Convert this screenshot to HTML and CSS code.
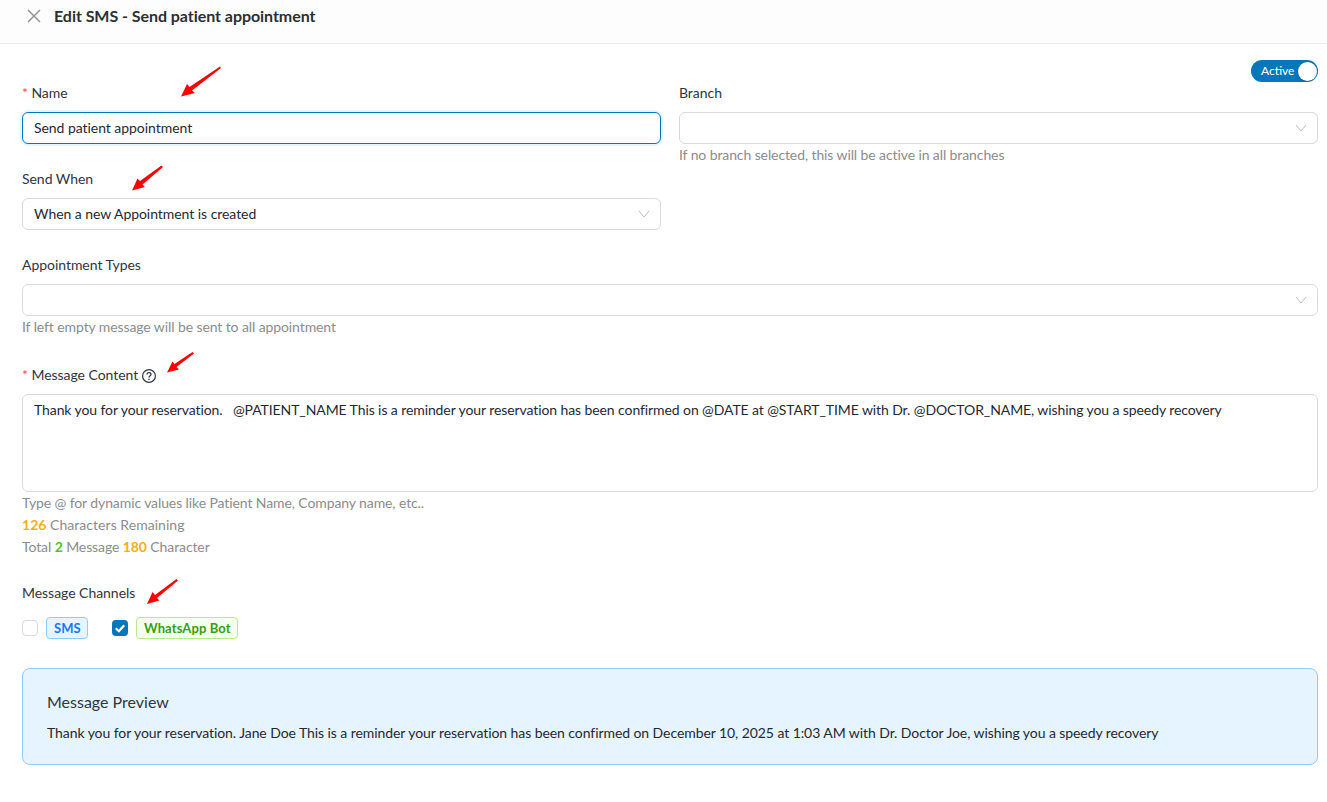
FILE: index.html
```html
<!DOCTYPE html>
<html lang="en">
<head>
    <meta charset="UTF-8">
    <title>Edit SMS - Send patient appointment</title>
    <link rel="stylesheet" href="styles.css">
</head>
<body>
    <div class="header">
        <svg class="close-icon" viewBox="0 0 14 14" width="14" height="14"><path d="M1 1L13 13M13 1L1 13" stroke="#8c8c8c" stroke-width="1.4" fill="none"/></svg>
        <div class="title">Edit SMS - Send patient appointment</div>
    </div>

    <div class="content">
        <div class="toggle-row">
            <div class="toggle"><span>Active</span><i class="toggle-knob"></i></div>
        </div>

        <div class="two-cols">
            <div>
                <div class="form-group">
                    <label class="form-label"><span class="required">*</span>Name</label>
                    <div class="form-input focused">Send patient appointment</div>
                </div>
                <div class="form-group">
                    <label class="form-label">Send When</label>
                    <div class="form-input">
                        When a new Appointment is created
                        <svg class="chevron" viewBox="0 0 12 12" width="12" height="12"><path d="M1 3L6 9L11 3" stroke="#bfbfbf" stroke-width="1" fill="none"/></svg>
                    </div>
                </div>
            </div>
            <div>
                <div class="form-group">
                    <label class="form-label">Branch</label>
                    <div class="form-input">
                        <svg class="chevron" viewBox="0 0 12 12" width="12" height="12"><path d="M1 3L6 9L11 3" stroke="#bfbfbf" stroke-width="1" fill="none"/></svg>
                    </div>
                    <div class="help">If no branch selected, this will be active in all branches</div>
                </div>
            </div>
        </div>

        <div class="form-group with-help">
            <label class="form-label">Appointment Types</label>
            <div class="form-input">
                <svg class="chevron" viewBox="0 0 12 12" width="12" height="12"><path d="M1 3L6 9L11 3" stroke="#bfbfbf" stroke-width="1" fill="none"/></svg>
            </div>
            <div class="help">If left empty message will be sent to all appointment</div>
        </div>

        <div class="form-group">
            <label class="form-label">
                <span class="required">*</span>Message Content
                <svg class="help-icon" viewBox="0 0 14 14" width="14" height="14">
                    <circle cx="7" cy="7" r="6.4" stroke="#2f3640" stroke-width="1.2" fill="none"/>
                    <path d="M5 5.5C5 4.3 6 3.6 7 3.6C8 3.6 9 4.4 9 5.4C9 6.700 7 6.800 7 8.500" stroke="#2f3640" stroke-width="1.2" fill="none"/>
                    <circle cx="7" cy="10.300" r="0.8" fill="#2f3640"/>
                </svg>
            </label>
            <div class="form-textarea">Thank you for your reservation. &nbsp; @PATIENT_NAME This is a reminder your reservation has been confirmed on @DATE at @START_TIME with Dr. @DOCTOR_NAME, wishing you a speedy recovery</div>
            <div class="help">Type @ for dynamic values like Patient Name, Company name, etc..</div>
            <div class="help loose"><b class="orange">126</b> Characters Remaining</div>
            <div class="help">Total <b class="green">2</b> Message <b class="orange">180</b> Character</div>
        </div>

        <div class="form-group">
            <label class="form-label">Message Channels</label>
            <div class="channels">
                <div class="channel">
                    <span class="checkbox"></span>
                    <span class="tag tag-blue">SMS</span>
                </div>
                <div class="channel">
                    <span class="checkbox checked">
                        <svg viewBox="0 0 16 16" width="16" height="16"><path d="M3.800 8.200L6.900 11.200L12.200 5.200" stroke="#fff" stroke-width="2.200" fill="none"/></svg>
                    </span>
                    <span class="tag tag-green">WhatsApp Bot</span>
                </div>
            </div>
        </div>

        <div class="preview">
            <div class="preview-title">Message Preview</div>
            <div class="preview-text">Thank you for your reservation. Jane Doe This is a reminder your reservation has been confirmed on December 10, 2025 at 1:03 AM with Dr. Doctor Joe, wishing you a speedy recovery</div>
        </div>
    </div>

    <!-- red annotation arrows drawn on top of the screenshot -->
    <svg class="arrows" width="1327" height="802" viewBox="0 0 1327 802">
        <g fill="#f00" stroke="none">
            <path d="M220 66.5L221 68L192 90.5L195 93L181 96.5L187 84L189.5 87Z"/>
            <path d="M161.5 165.5L163 167L142.5 184.5L145 187L132 190.5L137.5 178.5L140 181Z"/>
            <path d="M192.5 352L194 353.5L176.500 367L179 369.500L167 372.500L172.500 361.500L174.500 364Z"/>
            <path d="M176.500 579L178 580.500L157 598L159.500 600.500L147 604L152.500 592L155 595Z"/>
        </g>
    </svg>
</body>
</html>
```
FILE: styles.css
```css
* {
    margin: 0;
    padding: 0;
    box-sizing: border-box;
}

body {
    width: 1327px;
    height: 802px;
    overflow: hidden;
    position: relative;
    font-family: Lato, sans-serif;
    font-size: 14px;
    line-height: 22px;
    background: #fff;
    color: #1f2933;
}

.header {
    height: 44px;
    padding: 0 26px 11px 27px;
    display: flex;
    align-items: center;
    gap: 13px;
    background: #fdfdfd;
    border-bottom: 1px solid #ececec;
}

.title {
    font-size: 16px;
    font-weight: 700;
    letter-spacing: -0.05px;
    color: #2b2f33;
}

.content {
    padding: 16px 9px 0 22px;
}

.toggle-row {
    display: flex;
    justify-content: flex-end;
}

.toggle {
    width: 67px;
    height: 22px;
    padding: 0 1px 0 10px;
    border-radius: 11px;
    background: #0477ba;
    color: #fff;
    font-size: 12px;
    display: flex;
    align-items: center;
    justify-content: space-between;
}

.toggle-knob {
    width: 19px;
    height: 19px;
    border-radius: 50%;
    background: #fff;
    box-shadow: 0 1px 2px rgba(0, 35, 11, 0.2);
}

.two-cols {
    display: grid;
    grid-template-columns: 639px 639px;
    gap: 18px;
}

.form-group {
    margin-bottom: 24px;
}

.form-group.with-help {
    margin-bottom: 26px;
}

.form-label {
    display: block;
    height: 22px;
    margin-bottom: 8px;
    letter-spacing: -0.04px;
    color: #2f3640;
}

.required {
    color: #ff4d4f;
    margin-right: 3.5px;
}

.help-icon {
    vertical-align: -2.5px;
}

.form-input {
    height: 32px;
    padding: 4px 11px;
    border: 1px solid #d9d9d9;
    border-radius: 6px;
    background: #fff;
    letter-spacing: -0.05px;
    position: relative;
}

.form-input.focused {
    border-color: #0477ba;
    box-shadow: 0 0 0 2px rgba(5, 145, 255, 0.1);
}

.chevron {
    position: absolute;
    right: 10px;
    top: 9px;
}

.help {
    color: #8c8c8c;
    letter-spacing: -0.1px;
}

.help.loose {
    letter-spacing: 0.04px;
}

.form-textarea {
    height: 98px;
    padding: 4px 11px;
    border: 1px solid #d9d9d9;
    border-radius: 6px;
    background: #fff;
    letter-spacing: -0.093px;
}

.channels {
    display: flex;
    gap: 24px;
    height: 22px;
    margin-top: 13px;
}

.channel {
    display: flex;
    align-items: center;
    gap: 8px;
}

.checkbox {
    width: 16px;
    height: 16px;
    border: 1px solid #d9d9d9;
    border-radius: 4px;
    background: #fff;
    display: block;
}

.checkbox.checked {
    border: none;
    background: #0477ba;
}

.checkbox svg {
    display: block;
}

.tag {
    height: 22px;
    padding: 0 7px;
    font-size: 13px;
    line-height: 20px;
    font-weight: 700;
    white-space: nowrap;
    border-radius: 4px;
    border: 1px solid;
}

.tag-blue {
    width: 42px;
    text-align: center;
    color: #1677ff;
    background: #e6f4ff;
    border-color: #91caff;
}

.tag-green {
    width: 102px;
    letter-spacing: 0.1px;
    color: #389e0d;
    background: #f6ffed;
    border-color: #b7eb8f;
}

.orange {
    color: #faad14;
}

.green {
    color: #52c41a;
}

.preview {
    height: 97px;
    margin-top: 29px;
    padding: 21px 24px;
    background: #e6f4ff;
    border: 1px solid #91caff;
    border-radius: 8px;
}

.preview-title {
    font-size: 16px;
    line-height: 24px;
    margin-bottom: 8px;
    color: #2f3640;
}

.preview-text {
    letter-spacing: -0.073px;
}

.arrows {
    position: absolute;
    left: 0;
    top: 0;
    pointer-events: none;
}
```
